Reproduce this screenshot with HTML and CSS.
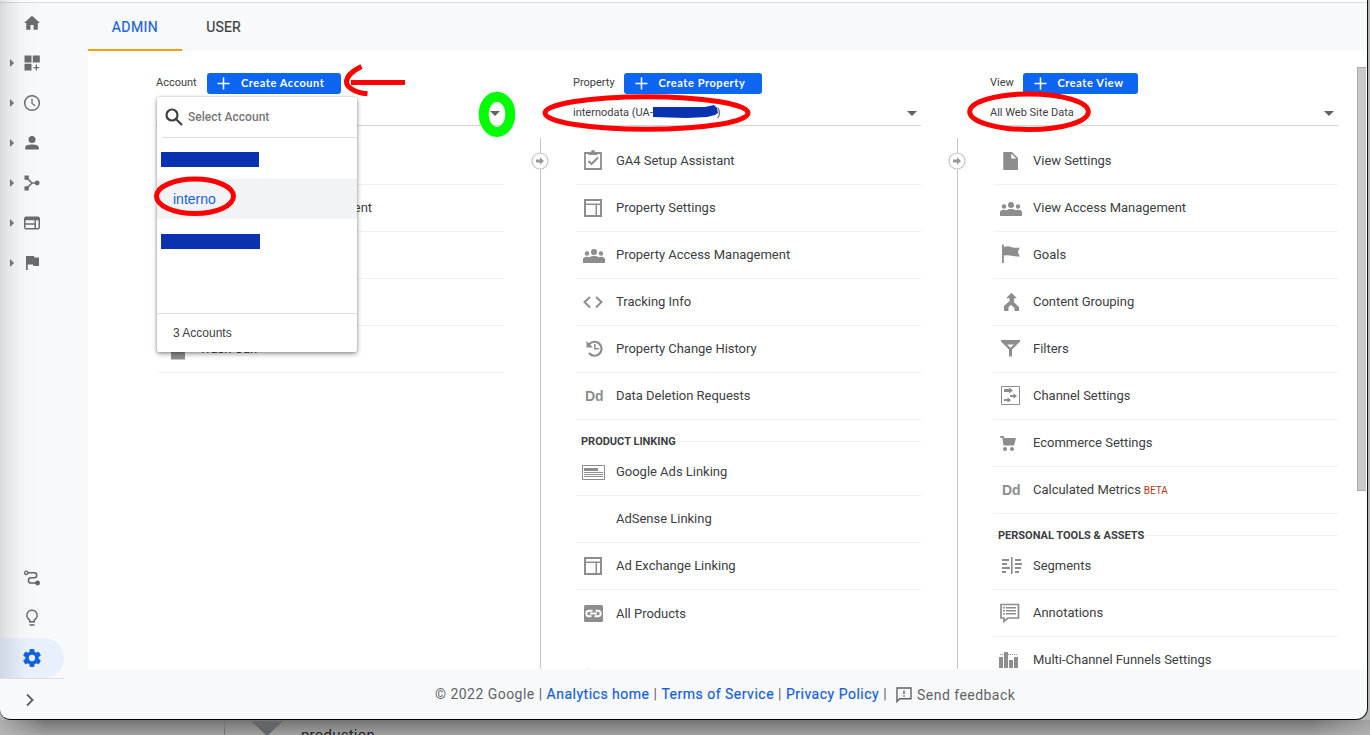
FILE: index.html
```html
<!DOCTYPE html>
<html lang="en">
<head>
<meta charset="utf-8">
<title>Analytics Admin</title>
<link rel="stylesheet" href="styles.css">
</head>
<body>
<svg class="defs" width="0" height="0" aria-hidden="true">
  <symbol id="people" viewBox="0 0 28 28"><circle cx="6" cy="12.5" r="2.2"/><circle cx="13" cy="11" r="3"/><circle cx="20" cy="12.5" r="2.2"/><path d="M2 22v-3.500q0-2.800 4-2.800l2.300.5Q10 15 13 15t4.700 1.200l2.300-.5q4 0 4 2.800V22z"/></symbol>
  <symbol id="layout" viewBox="0 0 28 28"><path fill-rule="evenodd" d="M3 5h18v18H3zM5 7v2.500h14V7zM5 11v10h9.500V11zM16 11v10h3V11z"/></symbol>
  <symbol id="plus" viewBox="0 0 13 13"><path d="M6.500 .5v12M.5 6.500h12" stroke="#fff" stroke-width="1.500"/></symbol>
  <symbol id="step" viewBox="0 0 18 18"><circle cx="9" cy="9" r="8" fill="#fff" stroke="#c4c4c4" stroke-width="1.200"/><path fill="#999" d="M5 7.500h4V5.300L13 9l-4 3.700v-2.200H5z"/></symbol>
</svg>

<div class="window">
  <nav class="sidebar">
    <div class="nav-group">
      <div class="nav-item plain"><svg viewBox="0 0 16 16"><path d="M8 .8 0 8h2.200v6.800h4.300V10h3v4.800h4.300V8H16z"/></svg></div>
      <div class="nav-item"><svg viewBox="0 0 16 16"><path d="M.5.5h7v7h-7zM8.800.5h7v7h-7zM.5 8.800h7v6.700h-7zM11.700 9.500h1.300V12h2.300v1.300H13v2.300h-1.300v-2.300H9.500V12h2.200z"/></svg></div>
      <div class="nav-item"><svg viewBox="0 0 16 16"><circle cx="8" cy="8" r="7.300" fill="none" stroke="currentColor" stroke-width="1.500"/><path d="M8 3.700V8.500l3.300 2.200" fill="none" stroke="currentColor" stroke-width="1.300"/></svg></div>
      <div class="nav-item"><svg viewBox="0 0 16 16"><circle cx="8" cy="4.500" r="3.500"/><path d="M1.200 14.500v-2Q1.200 9.500 8 9.500t6.800 3v2z"/></svg></div>
      <div class="nav-item"><svg viewBox="0 0 16 16"><path d="M.5.5h4.300v4.300H.5zM.5 11.200h4.300v4.300H.5z"/><circle cx="13.200" cy="8" r="2.400"/><path d="M3 3l5 5-5 5M8 8h5" fill="none" stroke="currentColor" stroke-width="1.500"/></svg></div>
      <div class="nav-item"><svg viewBox="0 0 16 16"><path fill-rule="evenodd" d="M1.500 1.500h13L16 3v10l-1.500 1.500h-13L0 13V3zM1.500 5.300v3h9v-3zM12 5.300V13h2.500V5.300zM1.500 9.700V13h9V9.700z"/></svg></div>
      <div class="nav-item"><svg viewBox="0 0 16 16"><path d="M2 1h8l.5 1.500H15v8.500H9.500L9 9.500H3.700V15H2z"/></svg></div>
    </div>
    <div class="nav-group bottom">
      <div class="nav-item plain"><svg viewBox="0 0 16 16"><circle cx="2.300" cy="2.800" r="1.700" fill="none" stroke="currentColor" stroke-width="1.300"/><circle cx="13.600" cy="13" r="2.400"/><path d="M4 2.800h6.200a2.400 2.400 0 0 1 0 5H7a2.600 2.600 0 0 0 0 5.200h5" fill="none" stroke="currentColor" stroke-width="1.500"/></svg></div>
      <div class="nav-item plain"><svg viewBox="0 0 16 16"><path d="M5.700 11.800V10A5.200 5.200 0 1 1 10.300 10v1.800zM5.500 15h5" fill="none" stroke="currentColor" stroke-width="1.400"/></svg></div>
      <div class="nav-item plain active"><svg viewBox="2 2 20 20"><path d="M19.430 12.980c.04-.32.07-.64.07-.98s-.03-.66-.07-.98l2.110-1.650c.19-.15.24-.42.12-.64l-2-3.460c-.12-.22-.39-.3-.61-.22l-2.490 1c-.52-.4-1.080-.73-1.690-.98l-.38-2.650A.49.490 0 0 0 14 2h-4c-.25 0-.46.18-.49.42l-.38 2.650c-.61.25-1.170.59-1.690.98l-2.490-1c-.23-.09-.49 0-.61.22l-2 3.460c-.13.22-.07.49.12.64l2.110 1.650c-.04.32-.07.65-.07.98s.03.66.07.98l-2.110 1.650c-.19.15-.24.42-.12.64l2 3.460c.12.22.39.3.61.22l2.490-1c.52.4 1.080.73 1.690.98l.38 2.650c.03.24.24.42.49.42h4c.25 0 .46-.18.49-.42l.38-2.650c.61-.25 1.170-.59 1.690-.98l2.490 1c.23.09.49 0 .61-.22l2-3.460c.12-.22.07-.49-.12-.64zM12 15.500a3.500 3.500 0 1 1 0-7 3.500 3.500 0 0 1 0 7z"/></svg></div>
      <div class="collapse"><svg viewBox="0 0 10 14"><path d="M2 1.500 7.500 7 2 12.500" fill="none" stroke="currentColor" stroke-width="1.900"/></svg></div>
    </div>
  </nav>

  <div class="page">
    <header class="tabs"><div class="tab selected">ADMIN</div><div class="tab">USER</div></header>

    <main class="admin">
      <section class="column account">
        <div class="col-head"><span class="head-label">Account</span><button class="create"><svg><use href="#plus"/></svg><span>Create Account</span></button></div>
        <div class="select"><span></span><i class="caret"></i></div>
        <div class="list">
          <div class="row"></div>
          <div class="row"><span class="icon"></span><span>Account Access Management</span></div>
          <div class="row"></div>
          <div class="row"></div>
          <div class="row"><svg class="icon" viewBox="0 0 28 28"><path d="M7 7h14v17.500H7z"/></svg><span>Trash Can</span></div>
        </div>
        <div class="popup">
          <div class="search"><svg viewBox="0 0 18 18"><circle cx="7" cy="7" r="5.500"/><path d="m11 11 6 6"/></svg><span>Select Account</span></div>
          <div class="options"><div class="option"><i class="mask"></i></div><div class="option chosen">interno</div><div class="option"><i class="mask wide"></i></div></div>
          <div class="count">3 Accounts</div>
        </div>
      </section>

      <section class="column property">
        <svg class="step"><use href="#step"/></svg>
        <div class="col-head"><span class="head-label">Property</span><button class="create"><svg><use href="#plus"/></svg><span>Create Property</span></button></div>
        <div class="select"><span class="value">internodata (UA-<svg class="scribble" viewBox="0 0 67 14"><path d="M1 2h52l9-2 3 3 1 5-3 2-8 2-20 1L1 12z"/></svg>)</span><i class="caret"></i></div>
        <div class="list">
          <div class="row"><svg class="icon" viewBox="0 0 28 28"><path fill="none" stroke="#8d8d8d" stroke-width="1.800" d="M4 6h16v16H4z"/><path d="M7.500 8V5H10a2 2 0 0 1 4 0h2.500v3z"/><path fill="none" stroke="#8d8d8d" stroke-width="2" d="m7.500 14 3 3 6.500-6.500"/></svg><span>GA4 Setup Assistant</span></div>
          <div class="row"><svg class="icon"><use href="#layout"/></svg><span>Property Settings</span></div>
          <div class="row"><svg class="icon"><use href="#people"/></svg><span>Property Access Management</span></div>
          <div class="row"><svg class="icon" viewBox="0 0 28 28"><path fill="none" stroke="#8d8d8d" stroke-width="2" d="m9 9-5.500 5L9 19.500M15 9l5.500 5-5.500 5.500"/></svg><span>Tracking Info</span></div>
          <div class="row"><svg class="icon" viewBox="0 0 28 28"><path fill="none" stroke="#8d8d8d" stroke-width="2.200" d="M8 9.500A7 7 0 1 1 8 18"/><path d="M5.500 6v6.500H12zM13 9h1.600v4h3.600v1.600H13z"/></svg><span>Property Change History</span></div>
          <div class="row"><span class="icon dd">Dd</span><span>Data Deletion Requests</span></div>
          <div class="heading"><span>PRODUCT LINKING</span></div>
          <div class="row"><svg class="icon" viewBox="0 0 28 28"><path fill="none" stroke="#8d8d8d" d="M1.500 7.500h22v14h-22z"/><path d="M3 10h14v3H3zM3 14h19v1H3zM3 16h19v1H3zM3 18h19v1H3z"/></svg><span>Google Ads Linking</span></div>
          <div class="row"><span class="icon"></span><span>AdSense Linking</span></div>
          <div class="row"><svg class="icon"><use href="#layout"/></svg><span>Ad Exchange Linking</span></div>
          <div class="row last"><svg class="icon" viewBox="0 0 28 28"><rect x="3" y="5" width="19" height="17" rx="1.500"/><path fill="none" stroke="#fff" stroke-width="1.900" d="M11.500 10.800H8a2.700 2.700 0 0 0 0 5.400h2.500M13.500 16.200H17a2.700 2.700 0 0 0 0-5.400h-2.500M9 13.500h7"/></svg><span>All Products</span></div>
          <div class="row peek"><svg class="icon" viewBox="0 0 28 28"><path d="M3 4h3V3h1v1h8v12H3z"/></svg></div>
        </div>
      </section>

      <section class="column view">
        <svg class="step"><use href="#step"/></svg>
        <div class="col-head"><span class="head-label">View</span><button class="create"><svg><use href="#plus"/></svg><span>Create View</span></button></div>
        <div class="select"><span class="value">All Web Site Data</span><i class="caret"></i></div>
        <div class="list">
          <div class="row"><svg class="icon" viewBox="0 0 28 28"><path fill-rule="evenodd" d="M5.300 5h8.700l6 6v12H5.300zM13.300 6.500V11.500h5z"/></svg><span>View Settings</span></div>
          <div class="row"><svg class="icon"><use href="#people"/></svg><span>View Access Management</span></div>
          <div class="row"><svg class="icon" viewBox="0 0 28 28"><path d="M4 3.500h1.800V6q4-1.500 8 .3 4 1 8 .2l-2 4.300 2 4.600q-4 .6-8-.6-4-1.200-8-.2v7.400H4z"/></svg><span>Goals</span></div>
          <div class="row"><svg class="icon" viewBox="0 0 28 28"><path d="m13.500 4.700 5.500 5.500h-3v4L10.500 19v4H6v-5l5.500-5v-2.800H8zM16 14.200l5 4.800v4h-4.500v-3l-3.500-3z"/></svg><span>Content Grouping</span></div>
          <div class="row"><svg class="icon" viewBox="0 0 28 28"><path fill-rule="evenodd" d="M3 5h19v1.500l-8 8V21.500h-3V14.500L3 6.500zM9 9.500l3.500 3.300L16 9.500z"/></svg><span>Filters</span></div>
          <div class="row"><svg class="icon" viewBox="0 0 28 28"><path fill="none" stroke="#8d8d8d" d="M3.500 4.500h18v18h-18z"/><path d="M6 7h5V5.500l4 3-4 3V10H6zM12 13h3.500v-1.800l3.500 2.800-3.500 2.700V15H12zM6 17h3.500v-1.700L13 18l-3.500 2.800V19H6z"/></svg><span>Channel Settings</span></div>
          <div class="row"><svg class="icon" viewBox="0 0 28 28"><path d="M2 7h3.500l1 2H18l-2 7.500H5.500L4.300 8.800H2z"/><circle cx="7" cy="20" r="2"/><circle cx="14" cy="20" r="2"/></svg><span>Ecommerce Settings</span></div>
          <div class="row"><span class="icon dd">Dd</span><span>Calculated Metrics</span><span class="beta">BETA</span></div>
          <div class="heading"><span>PERSONAL TOOLS &amp; ASSETS</span></div>
          <div class="row"><svg class="icon" viewBox="0 0 28 28"><path d="M13 5h1.600v17H13zM4 7h7v2H4zM4 11h5v2H4zM4 15h8v2H4zM4 19h4v2H4zM17 7h6v2h-6zM17 11h7v2h-7zM17 15h6v2h-6zM17 19h4v2h-4z"/></svg><span>Segments</span></div>
          <div class="row"><svg class="icon" viewBox="0 0 28 28"><path fill="none" stroke="#8d8d8d" stroke-width="1.700" d="M3 5.500h17.500V19H10l-4 3.500V19H3z"/><path d="M5 8h2v1.500H5zM8 8h10v1.500H8zM5 11h2v1.500H5zM8 11h10v1.500H8zM5 14h2v1.500H5zM8 14h10v1.500H8z"/></svg><span>Annotations</span></div>
          <div class="row"><svg class="icon" viewBox="0 0 28 28"><path d="M1 11h4v11H1zM6 6h4v16H6zM11 14h4v8h-4zM16 11h4v11h-4z"/><path d="M2 8.500h17" stroke="#8d8d8d" stroke-dasharray="1 1"/></svg><span>Multi-Channel Funnels Settings</span></div>
        </div>
      </section>
      <div class="scrollbar"></div>
    </main>

    <footer class="footer">
      <span>© 2022 Google |</span><a>Analytics home</a><span>|</span><a>Terms of Service</a><span>|</span><a>Privacy Policy</a><span>|</span>
      <span class="feedback"><svg viewBox="0 0 16 16"><path fill="none" stroke="currentColor" stroke-width="1.400" d="M1 14.500V1h14v10.800H3.700z"/><path d="M7.300 3.500h1.400v3.500H7.300zM7.300 8.300h1.400v1.500H7.300z"/></svg>Send feedback</span>
    </footer>
  </div>
</div>

<div class="behind"><span class="arrow-down"></span><span class="caption">production</span></div>

<svg class="markup" viewBox="0 0 1370 735" fill="none" stroke="#fe0000" stroke-width="5">
  <ellipse cx="195" cy="196.300" rx="38.500" ry="17.200"/>
  <ellipse cx="646.500" cy="113" rx="101.500" ry="16.300"/>
  <ellipse cx="1029" cy="111.700" rx="59.300" ry="17.800"/>
  <path d="M351 82.500h54M361.500 66.500C352 71 346.500 77 346.500 82c0 5 8 10.500 21 11.800"/>
  <ellipse cx="497" cy="114.300" rx="13.300" ry="17.600" stroke="#00ff00" stroke-width="10"/>
</svg>
</body>
</html>
```
FILE: styles.css
```css
* { box-sizing: border-box; }
body {
  margin: 0;
  width: 1370px;
  height: 735px;
  overflow: hidden;
  position: relative;
  background: #b4b6b6;
  font-family: Roboto, "Liberation Sans", sans-serif;
  color: #3c4043;
}
.defs { position: absolute; }
svg { display: block; }

.window {
  display: flex;
  width: 1368px;
  height: 720px;
  border-right: 1px solid #111;
  border-bottom: 1px solid #050505;
  border-radius: 0 0 12px 10px;
  overflow: hidden;
  background: linear-gradient(#fff 2px, #dadce0 2px, #dadce0 3px, #f8f9fb 3px);
  position: relative;
  z-index: 1;
}

/* Sidebar */
.sidebar {
  width: 88px;
  padding-top: 3px;
  display: flex;
  flex-direction: column;
  justify-content: space-between;
  color: #6b6b6b;
  background: linear-gradient(90deg, rgba(0,0,0,.13), rgba(0,0,0,.07) 9px, rgba(0,0,0,.02) 22px, transparent 38px) 0 0 / 100% 678px no-repeat;
}
.nav-item {
  width: 64px;
  height: 40px;
  display: flex;
  align-items: center;
  padding-left: 10px;
  gap: 10px;
}
.nav-item::before {
  content: "";
  border-left: 4px solid #737373;
  border-top: 4px solid transparent;
  border-bottom: 4px solid transparent;
}
.nav-item.plain::before { border-left-color: transparent; }
.nav-item svg { width: 16px; height: 16px; fill: currentColor; overflow: visible; }
.nav-item.active {
  color: #1262df;
  background: linear-gradient(90deg, rgba(0,0,0,.1), transparent 28px), #e8f0fe;
  border-radius: 0 20px 20px 0;
}
.nav-item.active svg { width: 18px; height: 18px; margin-left: -1px; }
.nav-group.bottom { color: #5f6368; }
.collapse {
  width: 64px;
  height: 41px;
  border-top: 1px solid #dcdddf;
  padding: 14px 0 0 25px;
}
.collapse svg { width: 10px; height: 14px; }

/* Tabs */
.page { flex: 1; display: flex; flex-direction: column; min-width: 0; }
.tabs { height: 51px; display: flex; padding-top: 3px; }
.tab {
  width: 94px;
  padding-top: 2px;
  border-bottom: 2px solid transparent;
  display: flex;
  align-items: center;
  justify-content: center;
  font-size: 14px;
  -webkit-text-stroke: .2px;
  letter-spacing: .1px;
}
.tab + .tab { width: 83px; }
.tab.selected { color: #1a62d8; border-bottom-color: #f99d0d; letter-spacing: .4px; }

/* Columns */
.admin {
  height: 618px;
  overflow: hidden;
  background: #fff;
  padding: 22px 0 0 68px;
  display: grid;
  grid-template-columns: 348px 348px 348px;
  column-gap: 69px;
  position: relative;
}
.column { position: relative; height: 596px; }
.property::before, .view::before {
  content: "";
  position: absolute;
  left: -33px;
  top: 65px;
  bottom: 0;
  border-left: 1px solid #c6c6c6;
}
.step { position: absolute; left: -42px; top: 79px; width: 18px; height: 18px; }
.col-head { height: 21px; display: flex; align-items: center; }
.head-label { font-size: 11px; width: 51px; letter-spacing: 0; margin-top: -2px; }
.view .head-label { width: 33px; }
.create {
  width: 134px;
  height: 21px;
  border: 0;
  border-radius: 3px;
  background: #0c66f2;
  color: #fff;
  display: flex;
  align-items: center;
  gap: 11px;
  padding: 0 0 1px 10px;
  font: 700 11px Lato, sans-serif;
  letter-spacing: .57px;
  white-space: nowrap;
}
.create span { margin-top: -1px; }
.create svg { width: 13px; height: 13px; flex: none; }
.property .create { width: 138px; }
.property .create, .view .create { padding-left: 10.5px; }
.view .create { width: 115px; }
.select {
  height: 32px;
  border-bottom: 1px solid #d4d4d4;
  display: flex;
  justify-content: space-between;
  align-items: center;
  padding: 7px 4px 0 0;
  font-size: 11px;
}
.value { display: flex; align-items: center; margin-top: -2px; letter-spacing: 0; }
.scribble { width: 67px; height: 14px; fill: #0a31b0; margin: -1px -2px 0 -1px; }
.caret {
  width: 0;
  border-top: 5px solid #5f6368;
  border-left: 5px solid transparent;
  border-right: 5px solid transparent;
}
.list { margin: 12px 0 0 3px; }
.account .list { margin-left: 2px; }
.row {
  height: 47px;
  border-bottom: 1px solid #f1f1f1;
  display: flex;
  align-items: center;
  padding-left: 5px;
  font-size: 13px;
  letter-spacing: -.02px;
  white-space: nowrap;
}
.account .row { padding-left: 6px; }
.row span:not(.icon) { padding-bottom: 2px; }
.row.last { height: 48px; border: 0; padding-top: 1px; }
.row.last .icon { margin-top: -1px; }
.row.peek { border: 0; align-items: flex-start; padding-top: 27px; opacity: .3; }
.icon { width: 28px; height: 28px; flex: none; margin-right: 7px; fill: #8d8d8d; }
.dd { font: 700 14px/28px "Liberation Sans", sans-serif; color: #8d8d8d; padding-left: 4px; letter-spacing: 0; }
.beta { color: #b93815; font-size: 10px; margin: 2px 0 0 3px; }
.heading { height: 29px; display: flex; align-items: center; position: relative; padding: 0 0 0 5px; }
.heading::before { content: ""; position: absolute; left: 0; right: 0; top: 21px; border-top: 1px solid #f1f1f1; }
.heading span { position: relative; background: #fff; font-size: 11px; line-height: 12px; font-weight: 700; margin-top: 14px; white-space: nowrap; }
.scrollbar { position: absolute; right: 1px; top: 16px; width: 9px; height: 424px; background: #c9c9c9; border: 1px solid #aaa; border-right: 0; }

/* Account picker */
.popup {
  position: absolute;
  left: 1px;
  top: 24px;
  width: 200px;
  height: 255px;
  background: #fff;
  border-radius: 2px;
  box-shadow: 0 2px 5px rgba(0,0,0,.4), 0 0 2px rgba(0,0,0,.25);
  display: flex;
  flex-direction: column;
}
.search {
  height: 41px;
  margin-left: 5px;
  padding-left: 3px;
  border-bottom: 1px solid #dadce0;
  display: flex;
  align-items: center;
  gap: 5px;
  font-size: 12px;
  font-weight: 500;
  color: #777;
  letter-spacing: .02px;
}
.search svg { width: 18px; height: 18px; fill: none; stroke: #3c4043; stroke-width: 2.2; }
.options { flex: 1; padding-top: 1px; }
.option { height: 40px; padding-left: 16px; display: flex; align-items: center; font: 14px "Liberation Sans", sans-serif; }
.option.chosen { background: #f1f3f4; color: #1a62d8; }
.mask { width: 98px; height: 15px; background: #0a31b0; margin: 1px 0 0 -12px; }
.mask.wide { width: 99px; margin-top: 4px; }
.count { height: 39px; border-top: 1px solid #dadce0; padding-left: 16px; display: flex; align-items: center; font: 12px "Liberation Sans", sans-serif; }

/* Footer */
.footer { flex: 1; display: flex; align-items: center; gap: 4px; padding-left: 347px; font-size: 14px; letter-spacing: .47px; color: #5f6368; white-space: nowrap; }
.footer a { color: #155fd9; -webkit-text-stroke: .2px; letter-spacing: .5px; }
.feedback { display: flex; align-items: center; gap: 5px; margin: 1px 0 0 5px; }
.feedback svg { width: 16px; height: 16px; fill: currentColor; }

/* Page behind the window */
.behind {
  height: 15px;
  padding-left: 224px;
  display: flex;
  background: linear-gradient(90deg, rgba(190,190,190,.75), transparent 45px, transparent 1310px, rgba(190,190,190,.6)), linear-gradient(#737373, #a0a0a0);
}
.behind::before { content: ""; border-left: 1px solid #747474; }
.arrow-down { width: 32px; height: 15px; margin: 1px 0 0 26px; background: #626669; clip-path: polygon(0 0, 100% 0, 50% 100%); }
.caption { margin: 6px 0 0 18px; font: 15px/18px Roboto, sans-serif; color: #222; letter-spacing: .2px; }

.markup { position: absolute; left: 0; top: 0; width: 1370px; height: 735px; z-index: 2; }
```
